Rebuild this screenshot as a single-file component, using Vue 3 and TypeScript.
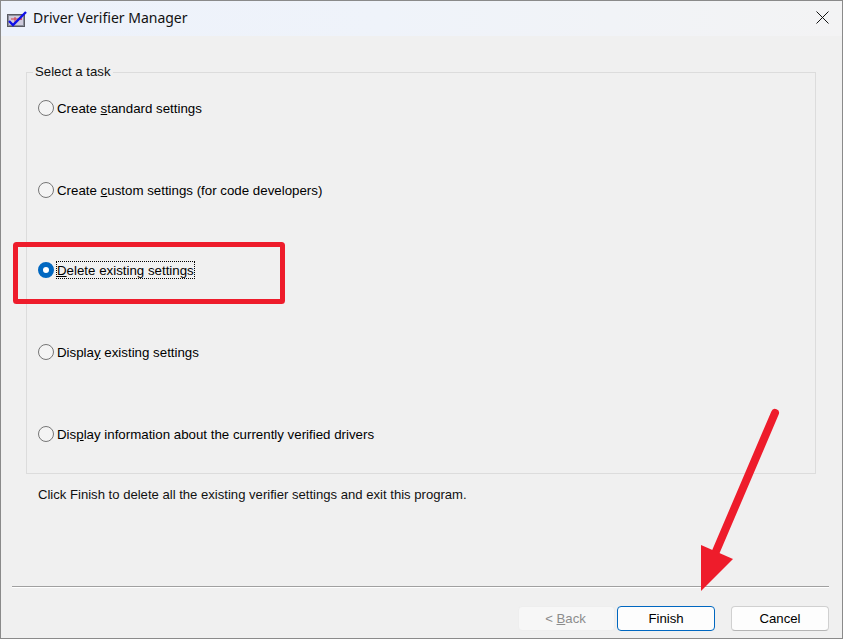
<script setup lang="ts">
interface Task { before: string; key: string; after: string; selected?: boolean }
const tasks: Task[] = [
  { before: 'Create ', key: 's', after: 'tandard settings' },
  { before: 'Create ', key: 'c', after: 'ustom settings (for code developers)' },
  { before: '', key: 'D', after: 'elete existing settings', selected: true },
  { before: 'Displa', key: 'y', after: ' existing settings' },
  { before: 'Dis', key: 'p', after: 'lay information about the currently verified drivers' },
]
</script>

<template>
  <div class="window">
    <header class="titlebar">
      <svg class="appicon" width="20" height="18" viewBox="0 0 20 18">
        <rect x="0.5" y="4.5" width="17" height="12" fill="#8a8f9c" stroke="#5a5a62" />
        <rect x="2" y="6" width="14" height="9" fill="#cfcbdc" />
        <path d="M4 9h10M8 7v6" stroke="#d0384a" stroke-width="1" />
        <rect x="13" y="8" width="2" height="2" fill="#e0506a" />
        <path d="M2 11l4 4L19 2" fill="none" stroke="#1010e8" stroke-width="2.4" />
      </svg>
      <span class="title">Driver Verifier Manager</span>
      <svg class="close" width="13" height="13" viewBox="0 0 13 13">
        <path d="M.5.5l12 12M12.5.5l-12 12" stroke="#111" stroke-width="1" />
      </svg>
    </header>

    <main class="content">
      <fieldset class="group">
        <legend>Select a task</legend>
        <div class="tasks">
          <div v-for="t in tasks" :key="t.after" class="task">
            <span class="radio" :class="{ on: t.selected }"></span>
            <span class="label" :class="{ focus: t.selected }"><span class="text">{{ t.before }}<u>{{ t.key }}</u>{{ t.after }}</span></span>
          </div>
        </div>
      </fieldset>
      <p class="hint">Click Finish to delete all the existing verifier settings and exit this program.</p>
    </main>

    <footer class="footer">
      <div class="rule"></div>
      <div class="buttons">
        <button class="btn back" disabled>&lt; <u>B</u>ack</button>
        <button class="btn finish">Finish</button>
        <button class="btn cancel">Cancel</button>
      </div>
    </footer>

    <svg class="marks" width="843" height="639" viewBox="0 0 843 639">
      <rect x="15.5" y="244.5" width="267" height="57" rx="1" fill="none" stroke="#ee1c2b" stroke-width="5" />
      <path d="M775 413L714 556" fill="none" stroke="#ee1c2b" stroke-width="8" stroke-linecap="round" />
      <path d="M701 545L733 559L701 591Z" fill="#ee1c2b" />
    </svg>
  </div>
</template>

<style>
html, body { margin: 0; background: #f0f0f0; }
</style>

<style scoped>
.window {
  position: relative;
  width: 843px;
  height: 639px;
  box-sizing: border-box;
  display: flex;
  flex-direction: column;
  background: #f0f0f0;
  border: 1px solid #8a8a8a;
  overflow: hidden;
  color: #000;
  font: 13.2px/16px "Liberation Sans", Arial, sans-serif;
}
.titlebar {
  flex: none;
  height: 35px;
  display: flex;
  align-items: center;
  padding: 0 13px 0 6px;
  background: linear-gradient(90deg, #edf2fb 0%, #eff3fa 45%, #f3f3f4 100%);
}
.appicon { flex: none; margin-right: 6px; }
.title { flex: 1; font: 14px "Noto Sans", "Open Sans", sans-serif; color: #111; margin-bottom: 2px; }
.close { margin-bottom: 2px; }
.content { flex: 1; padding: 27px 26px 0 25px; }
.group {
  margin: 0;
  padding: 0;
  width: 790px;
  height: 411px;
  box-sizing: border-box;
  border: 1px solid #dcdcdc;
}
.group legend { margin-left: 6px; padding: 0 2px; line-height: 18px; color: #111; }
.tasks {
  display: grid;
  grid-template-rows: 82px 80px 82px 82px 82px;
  padding: 19px 0 0 11px;
}
.task { display: flex; align-items: flex-start; gap: 3px; }
.radio {
  flex: none;
  width: 16px;
  height: 16px;
  box-sizing: border-box;
  border: 1px solid #767676;
  border-radius: 50%;
  background: #f4f4f4;
}
.radio.on { border: 5px solid #0067c0; background: #fff; }
.label { font-size: 13.3px; height: 16px; }
.text { display: block; transform: translateY(1px); }
.label.focus { outline: 1px dotted #000; }
.hint { margin: 13px 0 0 12px; font-size: 13.1px; color: #111; }
.footer { flex: none; padding: 0 13px 7px 11px; }
.rule { height: 1px; background: #a0a0a0; border-bottom: 1px solid #fff; }
.buttons { display: flex; justify-content: flex-end; margin-top: 18px; }
.btn {
  width: 98px;
  height: 25px;
  box-sizing: border-box;
  padding: 0;
  border-radius: 4px;
  font: 13.2px "Liberation Sans", Arial, sans-serif;
  background: #fdfdfd;
  border: 1px solid #d0d0d0;
  border-bottom-color: #b4b4b4;
  color: #000;
}
.back { width: 97px; margin-right: 2px; padding-right: 2px; background: #f7f7f7; border-color: #eeeeee; color: #8c8c8c; }
.finish { border: 1px solid #0067c0; margin-right: 16px; }
.marks { position: absolute; left: -1px; top: -1px; pointer-events: none; }
</style>
